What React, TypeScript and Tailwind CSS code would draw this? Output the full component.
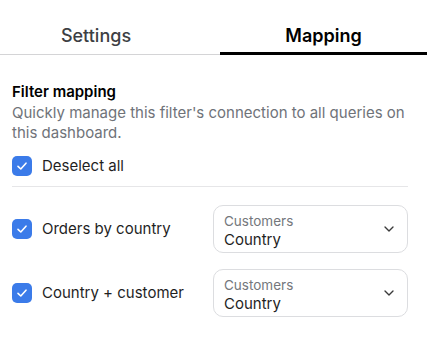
import { ChevronDown } from 'lucide-react';

function Check() {
  return (
    <div className="w-5 h-5 shrink-0 rounded-[5px] bg-[#3b7be9] flex items-center justify-center">
      <svg width="12" height="12" viewBox="0 0 12 12" fill="none">
        <path d="M2 6.3 4.8 9 10 3.2" stroke="white" strokeWidth="1.6" strokeLinecap="round" strokeLinejoin="round" />
      </svg>
    </div>
  );
}

function MappingRow({ label }: { label: string }) {
  return (
    <div className="flex items-center">
      <Check />
      <span className="ml-[10px] text-[15px] leading-5 text-[#1f1f1f]">{label}</span>
      <div className="ml-auto w-[195px] h-[48px] border border-[#dcdde0] rounded-[10px] pl-[10px] pr-[10px] pt-[5px] flex items-center">
        <div className="flex-1 -mt-[1px]">
          <div className="text-[13.5px] leading-[18px] text-[#74777c]">Customers</div>
          <div className="text-[15px] leading-5 text-[#1f1f1f]">Country</div>
        </div>
        <ChevronDown className="w-4 h-4 text-[#3a3a3a] -mt-[5px]" strokeWidth={2} />
      </div>
    </div>
  );
}

export default function App() {
  return (
    <div className="w-[427px] h-[353px] bg-white font-['Inter',sans-serif] overflow-hidden">
      {/* Tabs */}
      <div className="flex h-[55px] border-b border-[#d4d4d6]">
        <div className="w-[220px] pr-[28px] pt-[24px] flex justify-center">
          <span className="text-lg leading-6 font-medium text-[#3d3f44]">Settings</span>
        </div>
        <div className="flex-1 pt-[24px] flex justify-center border-b-[3px] border-black h-[55px]">
          <span className="text-lg leading-6 font-semibold text-black">Mapping</span>
        </div>
      </div>

      <div className="pl-3 pr-[19px] pt-[26px]">
        <div className="text-[15px] leading-[22px] font-semibold text-black">Filter mapping</div>
        <p className="text-[15px] leading-5 text-[#6f7379]">
          Quickly manage this filter's connection to all queries on this dashboard.
        </p>

        <div className="mt-[13px] flex items-center">
          <Check />
          <span className="ml-[10px] text-[15px] leading-5 text-[#1f1f1f]">Deselect all</span>
        </div>
        <div className="mt-[10px] border-t border-[#e6e6e8]" />

        <div className="mt-[18px] flex flex-col gap-4">
          <MappingRow label="Orders by country" />
          <MappingRow label="Country + customer" />
        </div>
      </div>
    </div>
  );
}
